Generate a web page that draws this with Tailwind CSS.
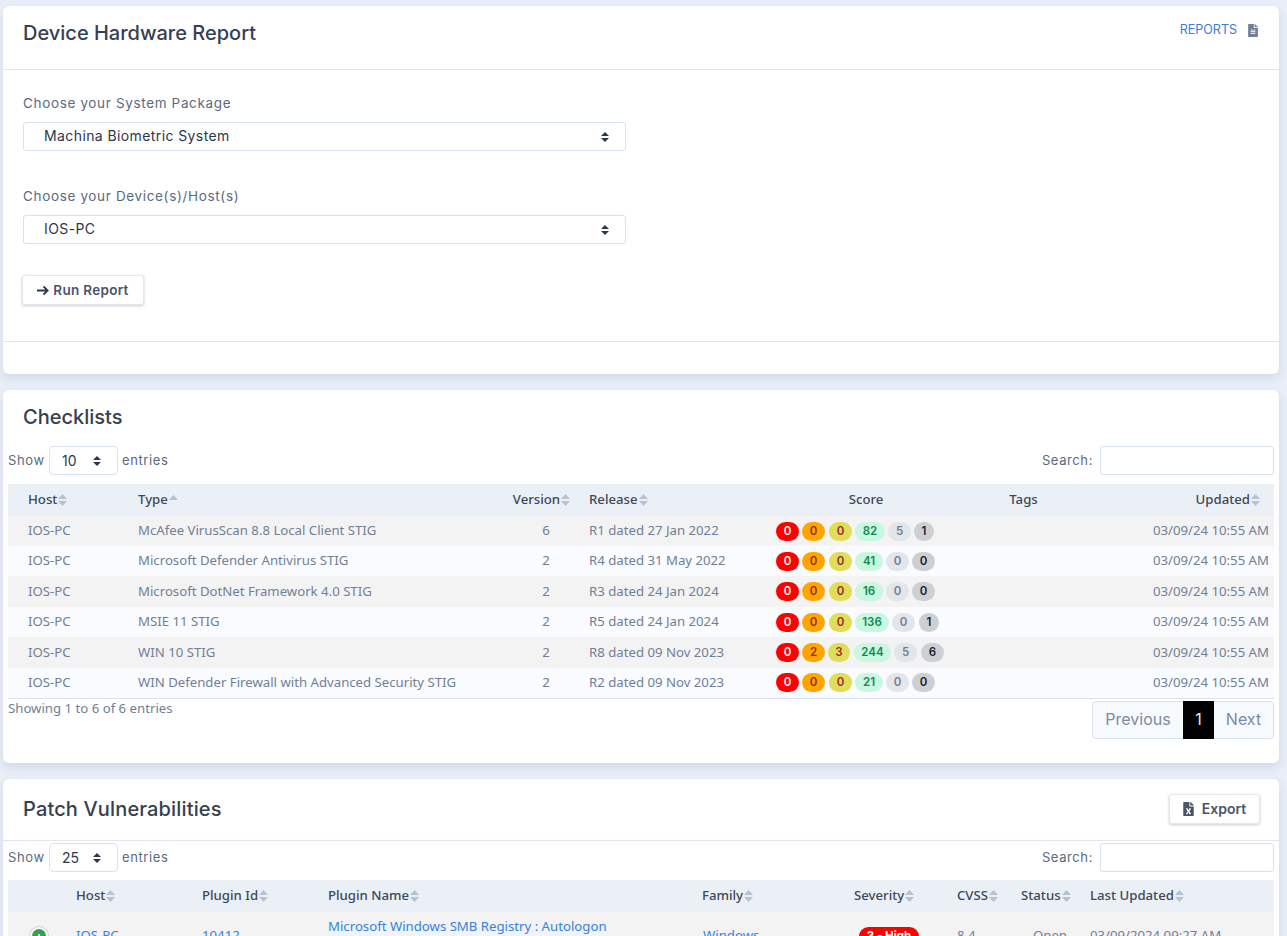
<!DOCTYPE html>
<html>
<head>
<meta charset="utf-8">
<script src="https://cdn.jsdelivr.net/npm/@tailwindcss/browser@4"></script>
</head>
<body class="h-[936px] overflow-hidden bg-[#e9eef8] font-['Noto_Sans',sans-serif]">
<div class="flex flex-col gap-4 pt-[6px] pl-[3px] pr-[8px]">

  <section class="flex h-[368px] flex-col rounded-md bg-white shadow-[0_4px_10px_rgba(100,120,160,0.18)]">
    <header class="flex h-[64px] shrink-0 items-start justify-between border-b border-[#dfe6ef] pl-5 pr-[21px]">
      <h1 class="mt-[13px] font-['Inter',sans-serif] text-[20px] leading-[28px] font-medium text-[#36404f]">Device Hardware Report</h1>
      <a class="mt-[15px] flex items-center gap-[11px] font-['Inter',sans-serif] text-[12.5px] leading-[18px] text-[#3b7dd8]">REPORTS
        <svg class="h-[13px] w-[10px] fill-[#718096]" viewBox="0 0 384 512"><path d="M224 136V0H24C10.7 0 0 10.7 0 24v464c0 13.3 10.7 24 24 24h336c13.3 0 24-10.7 24-24V160H248c-13.2 0-24-10.8-24-24zm64 236c0 6.6-5.4 12-12 12H108c-6.6 0-12-5.4-12-12v-8c0-6.6 5.4-12 12-12h168c6.6 0 12 5.4 12 12v8zm0-64c0 6.6-5.4 12-12 12H108c-6.6 0-12-5.4-12-12v-8c0-6.6 5.4-12 12-12h168c6.6 0 12 5.4 12 12v8zm0-72v8c0 6.6-5.4 12-12 12H108c-6.6 0-12-5.4-12-12v-8c0-6.6 5.4-12 12-12h168c6.6 0 12 5.4 12 12zm96-114.1v6.1H256V0h6.1c6.4 0 12.5 2.5 17 7l97.9 98c4.5 4.5 7 10.6 7 16.9z"/></svg>
      </a>
    </header>
    <div class="flex flex-1 flex-col items-start pl-5 pt-[23px]">
      <label class="font-['Inter',sans-serif] text-[13.5px] leading-[20px] tracking-[0.65px] text-[#5a6a80]">Choose your System Package</label>
      <div class="relative mt-[9px] flex h-[29px] w-[603px] items-center rounded-[3px] border border-[#d9e2ef] bg-white pb-[2px] pl-5 font-['Inter',sans-serif] text-[14px] tracking-[0.4px] text-[#2d3748]">Machina Biometric System
        <svg class="absolute top-[9px] right-[16px] h-[10px] w-[8px] fill-[#2d3748]" viewBox="0 0 8 10"><path d="M4 0 8 4H0zM4 10 0 6h8z"/></svg>
      </div>
      <label class="mt-[35px] font-['Inter',sans-serif] text-[13.5px] leading-[20px] tracking-[0.65px] text-[#5a6a80]">Choose your Device(s)/Host(s)</label>
      <div class="relative mt-[9px] flex h-[29px] w-[603px] items-center rounded-[3px] border border-[#d9e2ef] bg-white pb-[2px] pl-5 font-['Inter',sans-serif] text-[14px] tracking-[0.4px] text-[#2d3748]">IOS-PC
        <svg class="absolute top-[9px] right-[16px] h-[10px] w-[8px] fill-[#2d3748]" viewBox="0 0 8 10"><path d="M4 0 8 4H0zM4 10 0 6h8z"/></svg>
      </div>
      <button class="mt-[31px] -ml-px flex h-[30px] w-[122px] items-center justify-center gap-[4px] rounded-[3px] border border-[#e2e8f0] bg-white font-['Inter',sans-serif] text-[13.5px] tracking-[0.3px] font-semibold text-[#4a5568] shadow-[0_1px_3px_rgba(0,0,0,0.2)]">
        <svg class="h-[11px] w-[12px] fill-none stroke-[#2d3748] stroke-2" viewBox="0 0 13 11"><path d="M0 5.5h11M7 1l4.5 4.5L7 10"/></svg>Run Report
      </button>
    </div>
    <div class="h-[33px] shrink-0 border-t border-[#dfe6ef]"></div>
  </section>

  <section class="flex h-[373px] flex-col rounded-md bg-white px-[5px] shadow-[0_4px_10px_rgba(100,120,160,0.18)]">
    <h2 class="mt-[13px] pl-[15px] font-['Inter',sans-serif] text-[20px] leading-[28px] font-medium text-[#36404f]">Checklists</h2>
    <div class="mt-[15px] flex h-[29px] items-center justify-between font-['Inter',sans-serif] text-[13px] tracking-[0.6px] text-[#5a6a80]">
      <div class="flex items-center"><span class="w-[41px]">Show</span>
        <div class="relative mr-[4px] flex h-[29px] w-[69px] items-center rounded-[4px] border border-[#d9e2ef] pl-3 text-[14px] tracking-normal text-[#2d3748]">10
          <svg class="absolute top-[9px] right-[16px] h-[10px] w-[8px] fill-[#2d3748]" viewBox="0 0 8 10"><path d="M4 0 8 4H0zM4 10 0 6h8z"/></svg>
        </div>entries</div>
      <div class="flex items-center">Search:<div class="ml-[7px] h-[29px] w-[174px] rounded-[3px] border border-[#d9e2ef]"></div></div>
    </div>
    <table class="mt-[9px] w-[1266px] table-fixed border-b border-[#d9e2ef] text-[13.2px] text-[#718096]">
      <colgroup><col class="w-[110px]"><col class="w-[384px]"><col class="w-[79px]"><col class="w-[188px]"><col class="w-[194px]"><col class="w-[121px]"><col class="w-[190px]"></colgroup>
      <thead class="bg-[#ebf0f7] text-[#3d4858]">
        <tr class="h-[32px]">
          <th class="pl-5 text-left font-medium"><span class="inline-flex items-center gap-px">Host<svg class="h-[12px] w-[9px] fill-[#b7c2d0]" viewBox="0 0 9 12"><path d="M4.5 0 9 5H0zM4.5 12 0 7h9z"/></svg></span></th>
          <th class="pl-5 text-left font-medium"><span class="inline-flex items-center gap-px">Type<svg class="h-[12px] w-[9px] fill-[#b7c2d0]" viewBox="0 0 9 12"><path d="M4.5 1 9 6H0z"/></svg></span></th>
          <th class="text-center font-medium"><span class="inline-flex items-center gap-px">Version<svg class="h-[12px] w-[9px] fill-[#b7c2d0]" viewBox="0 0 9 12"><path d="M4.5 0 9 5H0zM4.5 12 0 7h9z"/></svg></span></th>
          <th class="pl-2 text-left font-medium"><span class="inline-flex items-center gap-px">Release<svg class="h-[12px] w-[9px] fill-[#b7c2d0]" viewBox="0 0 9 12"><path d="M4.5 0 9 5H0zM4.5 12 0 7h9z"/></svg></span></th>
          <th class="text-center font-medium">Score</th>
          <th class="text-center font-medium">Tags</th>
          <th class="pr-[14px] text-right font-medium"><span class="inline-flex items-center gap-px">Updated<svg class="h-[12px] w-[9px] fill-[#b7c2d0]" viewBox="0 0 9 12"><path d="M4.5 0 9 5H0zM4.5 12 0 7h9z"/></svg></span></th>
        </tr>
      </thead>
      <tbody>
        <tr class="h-[30px] bg-[#f3f3f4]"><td class="pl-5">IOS-PC</td><td class="pl-5">McAfee VirusScan 8.8 Local Client STIG</td><td class="pl-[9px] text-center">6</td><td class="pl-2">R1 dated 27 Jan 2022</td>
          <td class="pl-[7px]"><div class="flex gap-[3px] text-center font-['Inter',sans-serif] text-[11.5px] leading-[19px] font-semibold"><span class="w-[23px] rounded-full bg-[#ff0000] text-white">0</span><span class="w-[23px] rounded-full bg-[#ffa500] text-[#9b2c2c]">0</span><span class="ml-px w-[23px] rounded-full bg-[#e0dd58] text-[#9b2c2c]">0</span><span class="w-[30px] rounded-full bg-[#c9f7e0] text-[#0f8a55]">82</span><span class="w-[23px] rounded-full bg-[#e2e5ea] text-[#718096]">5</span><span class="w-[20px] rounded-full bg-[#cdd0d3] text-[#1a202c]">1</span></div></td>
          <td></td><td class="pr-[5px] text-right">03/09/24 10:55 AM</td></tr>
        <tr class="h-[30px] bg-[#f9fbff]"><td class="pl-5">IOS-PC</td><td class="pl-5">Microsoft Defender Antivirus STIG</td><td class="pl-[9px] text-center">2</td><td class="pl-2">R4 dated 31 May 2022</td>
          <td class="pl-[7px]"><div class="flex gap-[3px] text-center font-['Inter',sans-serif] text-[11.5px] leading-[19px] font-semibold"><span class="w-[23px] rounded-full bg-[#ff0000] text-white">0</span><span class="w-[23px] rounded-full bg-[#ffa500] text-[#9b2c2c]">0</span><span class="ml-px w-[23px] rounded-full bg-[#e0dd58] text-[#9b2c2c]">0</span><span class="w-[28px] rounded-full bg-[#c9f7e0] text-[#0f8a55]">41</span><span class="w-[23px] rounded-full bg-[#e2e5ea] text-[#718096]">0</span><span class="w-[23px] rounded-full bg-[#cdd0d3] text-[#1a202c]">0</span></div></td>
          <td></td><td class="pr-[5px] text-right">03/09/24 10:55 AM</td></tr>
        <tr class="h-[31px] bg-[#f3f3f4]"><td class="pl-5">IOS-PC</td><td class="pl-5">Microsoft DotNet Framework 4.0 STIG</td><td class="pl-[9px] text-center">2</td><td class="pl-2">R3 dated 24 Jan 2024</td>
          <td class="pl-[7px]"><div class="flex gap-[3px] text-center font-['Inter',sans-serif] text-[11.5px] leading-[19px] font-semibold"><span class="w-[23px] rounded-full bg-[#ff0000] text-white">0</span><span class="w-[23px] rounded-full bg-[#ffa500] text-[#9b2c2c]">0</span><span class="ml-px w-[23px] rounded-full bg-[#e0dd58] text-[#9b2c2c]">0</span><span class="w-[28px] rounded-full bg-[#c9f7e0] text-[#0f8a55]">16</span><span class="w-[23px] rounded-full bg-[#e2e5ea] text-[#718096]">0</span><span class="w-[23px] rounded-full bg-[#cdd0d3] text-[#1a202c]">0</span></div></td>
          <td></td><td class="pr-[5px] text-right">03/09/24 10:55 AM</td></tr>
        <tr class="h-[30px] bg-[#f9fbff]"><td class="pl-5">IOS-PC</td><td class="pl-5">MSIE 11 STIG</td><td class="pl-[9px] text-center">2</td><td class="pl-2">R5 dated 24 Jan 2024</td>
          <td class="pl-[7px]"><div class="flex gap-[3px] text-center font-['Inter',sans-serif] text-[11.5px] leading-[19px] font-semibold"><span class="w-[23px] rounded-full bg-[#ff0000] text-white">0</span><span class="w-[23px] rounded-full bg-[#ffa500] text-[#9b2c2c]">0</span><span class="ml-px w-[23px] rounded-full bg-[#e0dd58] text-[#9b2c2c]">0</span><span class="w-[34px] rounded-full bg-[#c9f7e0] text-[#0f8a55]">136</span><span class="w-[23px] rounded-full bg-[#e2e5ea] text-[#718096]">0</span><span class="ml-px w-[20px] rounded-full bg-[#cdd0d3] text-[#1a202c]">1</span></div></td>
          <td></td><td class="pr-[5px] text-right">03/09/24 10:55 AM</td></tr>
        <tr class="h-[31px] bg-[#f3f3f4]"><td class="pl-5">IOS-PC</td><td class="pl-5">WIN 10 STIG</td><td class="pl-[9px] text-center">2</td><td class="pl-2">R8 dated 09 Nov 2023</td>
          <td class="pl-[7px]"><div class="flex gap-[3px] text-center font-['Inter',sans-serif] text-[11.5px] leading-[19px] font-semibold"><span class="w-[23px] rounded-full bg-[#ff0000] text-white">0</span><span class="w-[23px] rounded-full bg-[#ffa500] text-[#9b2c2c]">2</span><span class="w-[22px] rounded-full bg-[#e0dd58] text-[#9b2c2c]">3</span><span class="ml-px w-[37px] rounded-full bg-[#c9f7e0] text-[#0f8a55]">244</span><span class="w-[23px] rounded-full bg-[#e2e5ea] text-[#718096]">5</span><span class="ml-px w-[23px] rounded-full bg-[#cdd0d3] text-[#1a202c]">6</span></div></td>
          <td></td><td class="pr-[5px] text-right">03/09/24 10:55 AM</td></tr>
        <tr class="h-[30px] bg-[#f9fbff]"><td class="pl-5">IOS-PC</td><td class="pl-5">WIN Defender Firewall with Advanced Security STIG</td><td class="pl-[9px] text-center">2</td><td class="pl-2">R2 dated 09 Nov 2023</td>
          <td class="pl-[7px]"><div class="flex gap-[3px] text-center font-['Inter',sans-serif] text-[11.5px] leading-[19px] font-semibold"><span class="w-[23px] rounded-full bg-[#ff0000] text-white">0</span><span class="w-[23px] rounded-full bg-[#ffa500] text-[#9b2c2c]">0</span><span class="ml-px w-[23px] rounded-full bg-[#e0dd58] text-[#9b2c2c]">0</span><span class="w-[28px] rounded-full bg-[#c9f7e0] text-[#0f8a55]">21</span><span class="w-[23px] rounded-full bg-[#e2e5ea] text-[#718096]">0</span><span class="w-[23px] rounded-full bg-[#cdd0d3] text-[#1a202c]">0</span></div></td>
          <td></td><td class="pr-[5px] text-right">03/09/24 10:55 AM</td></tr>
      </tbody>
    </table>
    <div class="mt-[2px] flex items-start justify-between">
      <span class="-mt-px text-[13.2px] leading-[16px] text-[#718096]">Showing 1 to 6 of 6 entries</span>
      <div class="flex h-[38px] items-stretch rounded-[4px] border border-[#d9e2ef] bg-[#f7fafc] pb-0 font-['Inter',sans-serif] text-[16px] text-[#7d8aa0]">
        <span class="flex w-[90px] items-center justify-center pb-[2px]">Previous</span>
        <span class="-my-px flex w-[31px] items-center justify-center bg-black pb-[2px] text-[#e2e8f0]">1</span>
        <span class="flex w-[59px] items-center justify-center pb-[2px]">Next</span>
      </div>
    </div>
  </section>

  <section class="flex h-[400px] flex-col rounded-md bg-white shadow-[0_4px_10px_rgba(100,120,160,0.18)]">
    <header class="flex h-[62px] shrink-0 items-center justify-between border-b border-[#dfe6ef] pl-5 pr-[19px]">
      <h2 class="mb-[2px] font-['Inter',sans-serif] text-[20px] leading-[28px] tracking-[0.15px] font-medium text-[#36404f]">Patch Vulnerabilities</h2>
      <button class="mb-[2px] flex h-[30px] w-[91px] items-center justify-center gap-[8px] rounded-[3px] border border-[#e2e8f0] bg-white font-['Inter',sans-serif] text-[14px] font-semibold text-[#4a5568] shadow-[0_1px_3px_rgba(0,0,0,0.2)]">
        <svg class="h-[14px] w-[11px] fill-[#4a5568]" viewBox="0 0 384 512"><path d="M224 136V0H24C10.7 0 0 10.7 0 24v464c0 13.3 10.7 24 24 24h336c13.3 0 24-10.7 24-24V160H248c-13.2 0-24-10.8-24-24zm60.1 106.5L224 336l60.1 93.5c5.1 8-.6 18.5-10.1 18.5h-34.9c-4.4 0-8.5-2.4-10.6-6.3C208.9 405.5 192 373 192 373c-6.4 14.8-10 20-36.6 68.8-2.1 3.9-6.1 6.3-10.5 6.3H110c-9.5 0-15.2-10.5-10.1-18.5l60.3-93.5-60.3-93.5c-5.2-8 .6-18.5 10.1-18.5h34.8c4.4 0 8.5 2.4 10.6 6.3 26.1 48.8 20 33.6 36.6 68.5 0 0 6.1-11.7 36.6-68.5 2.1-3.9 6.2-6.3 10.6-6.3H274c9.5-.1 15.2 10.4 10.1 18.4zM384 121.9v6.1H256V0h6.1c6.4 0 12.5 2.5 17 7l97.9 98c4.5 4.5 7 10.6 7 16.9z"/></svg>Export
      </button>
    </header>
    <div class="px-[5px]">
      <div class="mt-[2px] flex h-[29px] items-center justify-between font-['Inter',sans-serif] text-[13px] tracking-[0.6px] text-[#5a6a80]">
        <div class="flex items-center"><span class="w-[41px]">Show</span>
          <div class="relative mr-[4px] flex h-[29px] w-[69px] items-center rounded-[4px] border border-[#d9e2ef] pl-3 text-[14px] tracking-normal text-[#2d3748]">25
            <svg class="absolute top-[9px] right-[16px] h-[10px] w-[8px] fill-[#2d3748]" viewBox="0 0 8 10"><path d="M4 0 8 4H0zM4 10 0 6h8z"/></svg>
          </div>entries</div>
        <div class="flex items-center">Search:<div class="ml-[7px] h-[29px] w-[174px] rounded-[3px] border border-[#d9e2ef]"></div></div>
      </div>
      <table class="mt-[8px] w-[1266px] table-fixed text-[13.2px] text-[#718096]">
        <colgroup><col class="w-[48px]"><col class="w-[126px]"><col class="w-[126px]"><col class="w-[374px]"><col class="w-[152px]"><col class="w-[103px]"><col class="w-[64px]"><col class="w-[69px]"><col class="w-[204px]"></colgroup>
        <thead class="bg-[#ebf0f7] text-[#3d4858]">
          <tr class="h-[32px]">
            <th></th>
            <th class="pl-5 text-left font-medium"><span class="inline-flex items-center gap-px">Host<svg class="h-[12px] w-[9px] fill-[#b7c2d0]" viewBox="0 0 9 12"><path d="M4.5 0 9 5H0zM4.5 12 0 7h9z"/></svg></span></th>
            <th class="pl-5 text-left font-medium"><span class="inline-flex items-center gap-px">Plugin Id<svg class="h-[12px] w-[9px] fill-[#b7c2d0]" viewBox="0 0 9 12"><path d="M4.5 0 9 5H0zM4.5 12 0 7h9z"/></svg></span></th>
            <th class="pl-5 text-left font-medium"><span class="inline-flex items-center gap-px">Plugin Name<svg class="h-[12px] w-[9px] fill-[#b7c2d0]" viewBox="0 0 9 12"><path d="M4.5 0 9 5H0zM4.5 12 0 7h9z"/></svg></span></th>
            <th class="pl-5 text-left font-medium"><span class="inline-flex items-center gap-px">Family<svg class="h-[12px] w-[9px] fill-[#b7c2d0]" viewBox="0 0 9 12"><path d="M4.5 0 9 5H0zM4.5 12 0 7h9z"/></svg></span></th>
            <th class="pl-5 text-left font-medium"><span class="inline-flex items-center gap-px">Severity<svg class="h-[12px] w-[9px] fill-[#b7c2d0]" viewBox="0 0 9 12"><path d="M4.5 0 9 5H0zM4.5 12 0 7h9z"/></svg></span></th>
            <th class="pl-5 text-left font-medium"><span class="inline-flex items-center gap-px">CVSS<svg class="h-[12px] w-[9px] fill-[#b7c2d0]" viewBox="0 0 9 12"><path d="M4.5 0 9 5H0zM4.5 12 0 7h9z"/></svg></span></th>
            <th class="pl-5 text-left font-medium"><span class="inline-flex items-center gap-px">Status<svg class="h-[12px] w-[9px] fill-[#b7c2d0]" viewBox="0 0 9 12"><path d="M4.5 0 9 5H0zM4.5 12 0 7h9z"/></svg></span></th>
            <th class="pl-5 text-left font-medium"><span class="inline-flex items-center gap-px">Last Updated<svg class="h-[12px] w-[9px] fill-[#b7c2d0]" viewBox="0 0 9 12"><path d="M4.5 0 9 5H0zM4.5 12 0 7h9z"/></svg></span></th>
          </tr>
        </thead>
        <tbody>
          <tr class="h-[48px] bg-[#f3f3f4]">
            <td class="pl-[22px]"><span class="flex h-[18px] w-[18px] items-center justify-center rounded-full border-2 border-white bg-[#31a24c] text-[13px] leading-none font-bold text-white ring-1 ring-[#cfcfcf]">+</span></td>
            <td class="pl-5 text-[#3182e8]">IOS-PC</td>
            <td class="pl-5 text-[#3182e8]">10412</td>
            <td class="pl-5 leading-[19px] text-[#3182e8]">Microsoft Windows SMB Registry : Autologon<br>Enabled</td>
            <td class="pl-[21px] text-[#3182e8]">Windows</td>
            <td class="pl-[25px]"><span class="inline-block w-[60px] rounded-full bg-[#ff0000] text-center font-['Inter',sans-serif] text-[11.5px] leading-[19px] font-bold text-white">3 - High</span></td>
            <td class="pl-5">8.4</td>
            <td class="pr-[3px] text-right">Open</td>
            <td class="pl-5">03/09/2024 09:27 AM</td>
          </tr>
        </tbody>
      </table>
    </div>
  </section>
</div>
</body>
</html>
